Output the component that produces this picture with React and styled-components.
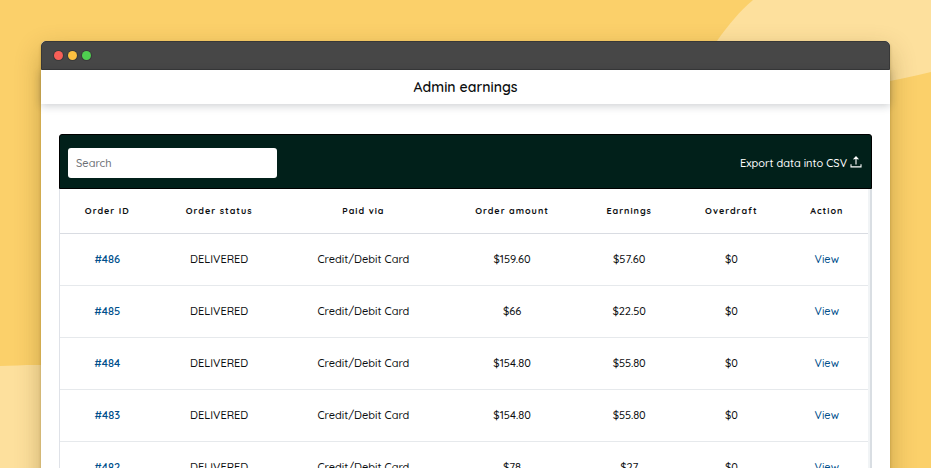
import React from "react"
import styled, { createGlobalStyle, ThemeProvider } from "styled-components"

const theme = {
  color: {
    background: "#fbd06a",
    blob: "#fde09d",
    chrome: "#474747",
    toolbar: "#01201a",
    text: "#0c0e10",
    link: "#004f8c",
    line: "#e6e9ec",
    white: "#ffffff",
  },
  font: `Quicksand, Lato, "Liberation Sans", sans-serif`,
}

const columns = [
  { label: "Order ID", width: "11.7%" },
  { label: "Order status", width: "16%" },
  { label: "Paid via", width: "19.7%" },
  { label: "Order amount", width: "17.1%" },
  { label: "Earnings", width: "11.9%" },
  { label: "Overdraft", width: "13.4%" },
  { label: "Action", width: "10.2%" },
]

const orders = [
  { id: 486, amount: "$159.60", earnings: "$57.60" },
  { id: 485, amount: "$66", earnings: "$22.50" },
  { id: 484, amount: "$154.80", earnings: "$55.80" },
  { id: 483, amount: "$154.80", earnings: "$55.80" },
  { id: 482, amount: "$78", earnings: "$27" },
]

const App = () => {
  return (
    <ThemeProvider theme={theme}>
      <GlobalStyle />
      <Page>
        <TopBlob viewBox="0 0 240 100" aria-hidden="true">
          <path d="M62 0 C49 11 37 25 26 41 C20 60 40 80 90 88 C140 94 190 84 240 72 V0 Z" />
        </TopBlob>
        <BottomBlob viewBox="0 0 120 104" aria-hidden="true">
          <path d="M0 2 C30 1 60 -2 120 10 V104 H0 Z" />
        </BottomBlob>
        <Window>
          <TitleBar>
            <Dot color="#f85f57" />
            <Dot color="#fcc040" />
            <Dot color="#4fce50" />
          </TitleBar>
          <Header>
            <Title>Admin earnings</Title>
          </Header>
          <Panel>
            <Toolbar>
              <Search type="search" placeholder="Search" aria-label="Search" />
              <ExportButton type="button">
                Export data into CSV
                <ExportIcon />
              </ExportButton>
            </Toolbar>
            <TableFrame>
              <Table>
                <colgroup>
                  {columns.map(column => (
                    <Column key={column.label} $width={column.width} />
                  ))}
                </colgroup>
                <thead>
                  <tr>
                    {columns.map(column => (
                      <HeadCell key={column.label}>{column.label}</HeadCell>
                    ))}
                  </tr>
                </thead>
                <tbody>
                  {orders.map(order => (
                    <tr key={order.id}>
                      <Cell>
                        <CellLink href={`#${order.id}`} $strong>
                          #{order.id}
                        </CellLink>
                      </Cell>
                      <Cell>DELIVERED</Cell>
                      <Cell>Credit/Debit Card</Cell>
                      <Cell>{order.amount}</Cell>
                      <Cell>{order.earnings}</Cell>
                      <Cell>$0</Cell>
                      <Cell>
                        <CellLink href={`#view-${order.id}`}>View</CellLink>
                      </Cell>
                    </tr>
                  ))}
                </tbody>
              </Table>
            </TableFrame>
          </Panel>
        </Window>
      </Page>
    </ThemeProvider>
  )
}

const ExportIcon = () => (
  <Icon viewBox="0 0 12 12" aria-hidden="true">
    <path d="M6 8.6 V1 M3.6 3.3 L6 0.9 L8.4 3.3 M1 8.2 V10.9 H11 V8.2" />
  </Icon>
)

const GlobalStyle = createGlobalStyle`
  * {
    box-sizing: border-box;
  }

  body {
    margin: 0;
    font-family: ${props => props.theme.font};
    color: ${props => props.theme.color.text};
  }
`

const Page = styled.div`
  position: relative;
  height: 100vh;
  overflow: hidden;
  padding: 41px 41px 0;
  background-color: ${props => props.theme.color.background};
`

const TopBlob = styled.svg`
  position: absolute;
  top: 0;
  right: 0;
  width: 240px;
  height: 100px;
  fill: ${props => props.theme.color.blob};
`

const BottomBlob = styled.svg`
  position: absolute;
  bottom: 0;
  left: 0;
  width: 120px;
  height: 104px;
  fill: ${props => props.theme.color.blob};
`

const Window = styled.main`
  position: relative;
  min-height: 100%;
  border-radius: 5px 5px 0 0;
  background-color: ${props => props.theme.color.white};
  box-shadow: 0 10px 26px rgba(90, 65, 0, 0.32), 0 2px 3px rgba(90, 65, 0, 0.3);
`

const TitleBar = styled.div`
  display: flex;
  align-items: center;
  gap: 5px;
  height: 29px;
  padding: 0 12px;
  border: 1px solid #383838;
  border-radius: 5px 5px 0 0;
  background-color: ${props => props.theme.color.chrome};
`

const Dot = styled.span`
  width: 9px;
  height: 9px;
  border-radius: 50%;
  background-color: ${props => props.color};
  box-shadow: 0 0 0 1px #3a3a3a;
`

const Header = styled.header`
  display: flex;
  justify-content: center;
  padding: 8px 0;
  box-shadow: 0 2px 8px rgba(30, 40, 50, 0.22);
`

const Title = styled.h1`
  margin: 0;
  font-size: 14px;
  line-height: 18px;
  font-weight: 600;
`

const Panel = styled.section`
  margin: 30px 18px 0;
`

const Toolbar = styled.div`
  display: flex;
  align-items: center;
  justify-content: space-between;
  padding: 13px 9px 10px 8px;
  border: 1px solid #000000;
  border-radius: 3px 3px 0 0;
  background-color: ${props => props.theme.color.toolbar};
`

const Search = styled.input`
  width: 209px;
  height: 30px;
  padding: 0 8px;
  border: 0;
  border-radius: 3px;
  background-color: ${props => props.theme.color.white};
  font-family: inherit;
  font-size: 11px;
  font-weight: 500;

  &::placeholder {
    color: #6a6e73;
  }
`

const ExportButton = styled.button`
  display: flex;
  align-items: center;
  gap: 3px;
  padding: 0;
  border: 0;
  background: none;
  color: ${props => props.theme.color.white};
  font-family: inherit;
  font-size: 11px;
  font-weight: 500;
`

const Icon = styled.svg`
  width: 12px;
  height: 12px;
  margin-bottom: 3px;
  fill: none;
  stroke: currentColor;
  stroke-width: 1.1;
`

const TableFrame = styled.div`
  padding-right: 2px;
  border-left: 1px solid #dfe2e8;
  border-right: 2px solid #d9dee3;
  background-color: #f1f4f6;
`

const Table = styled.table`
  width: 100%;
  table-layout: fixed;
  border-collapse: collapse;
  background-color: ${props => props.theme.color.white};
  text-align: center;
`

const Column = styled.col`
  width: ${props => props.$width};
`

const HeadCell = styled.th`
  height: 44px;
  padding: 0;
  border-bottom: 1px solid #d9dce2;
  font-size: 9px;
  font-weight: 700;
  letter-spacing: 1px;
`

const Cell = styled.td`
  height: 52px;
  padding: 0;
  border-bottom: 1px solid ${props => props.theme.color.line};
  font-size: 11px;
  font-weight: 500;
`

const CellLink = styled.a`
  color: ${props => props.theme.color.link};
  font-weight: ${props => (props.$strong ? 600 : 500)};
  text-decoration: none;
`

export default App
